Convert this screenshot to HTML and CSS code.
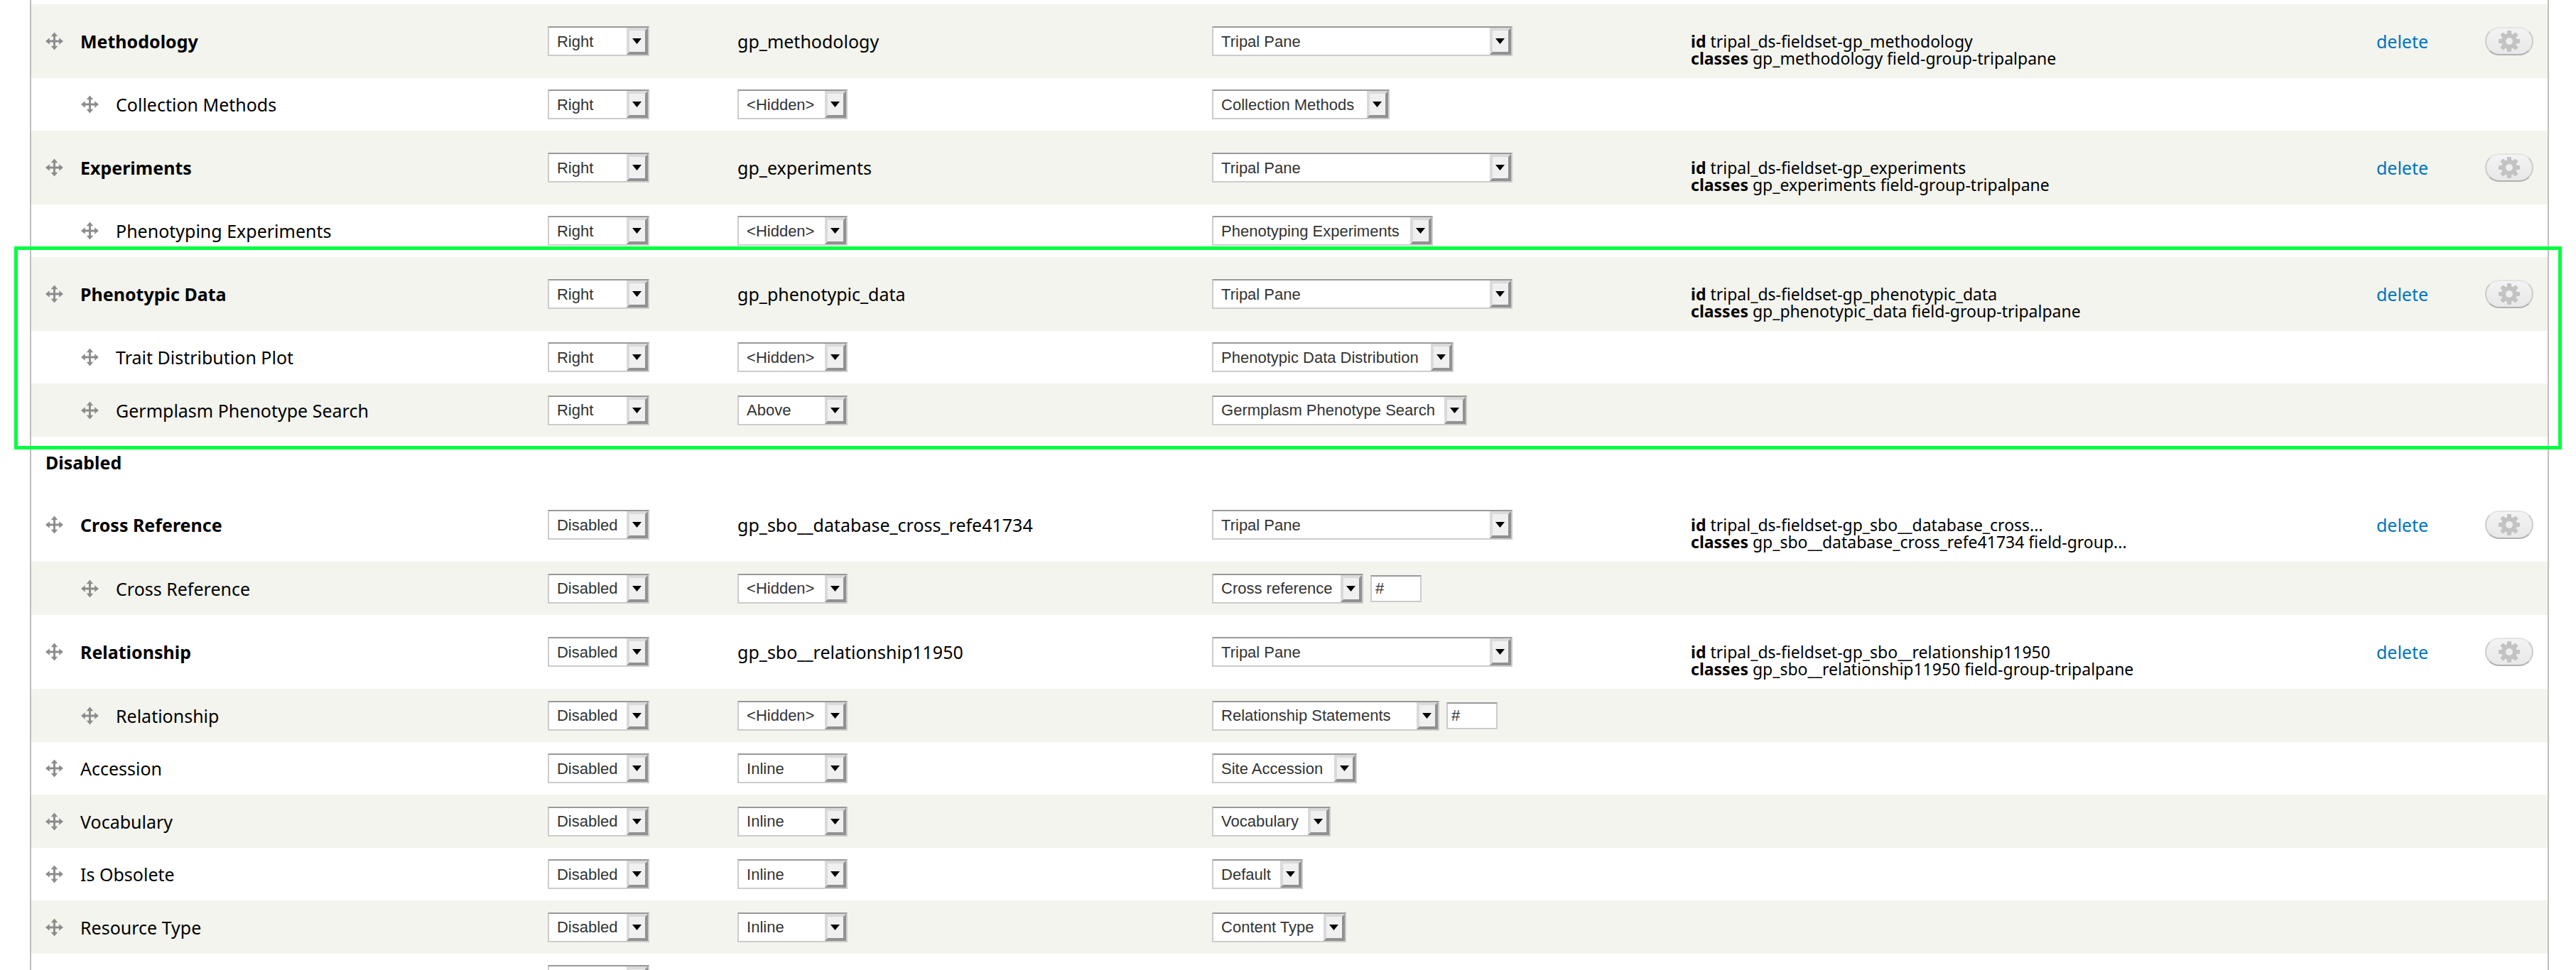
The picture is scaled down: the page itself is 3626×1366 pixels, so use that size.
FILE: index.html
```html
<!DOCTYPE html>
<html lang="en">
<head>
<meta charset="utf-8">
<title>Manage display</title>
<link rel="stylesheet" href="styles.css">
</head>
<body>
<svg class="sprite" aria-hidden="true">
  <symbol id="move" viewBox="0 0 26 26">
    <path d="M13 0l5 6h-3.500v5.500h5.500v-3.500l6 5l-6 5v-3.500h-5.500v5.500h3.500l-5 6l-5-6h3.500v-5.500h-5.500v3.500l-6-5l6-5v3.500h5.500v-5.500h-3.500z"/>
  </symbol>
  <symbol id="gear" viewBox="-15 -15 30 30">
    <g>
      <rect x="-3" y="-15" width="6" height="30" rx="1"/>
      <rect x="-3" y="-15" width="6" height="30" rx="1" transform="rotate(45)"/>
      <rect x="-3" y="-15" width="6" height="30" rx="1" transform="rotate(90)"/>
      <rect x="-3" y="-15" width="6" height="30" rx="1" transform="rotate(135)"/>
      <circle r="11"/>
    </g>
    <circle class="hole" r="5"/>
  </symbol>
</svg>
<main class="overview">
<table class="fields">
  <colgroup><col class="c-label"><col class="c-region"><col class="c-name"><col class="c-format"><col class="c-info"><col class="c-delete"><col class="c-settings"></colgroup>
  <tbody>
    <tr class="group odd">
      <td><div class="field"><svg class="move"><use href="#move"/></svg><b>Methodology</b></div></td>
      <td><select class="region" aria-label="Region for Methodology"><option>Right</option></select></td>
      <td>gp_methodology</td>
      <td><select class="pane" aria-label="Format for Methodology"><option>Tripal Pane</option></select></td>
      <td class="info"><b>id</b> tripal_ds-fieldset-gp_methodology<br><b>classes</b> gp_methodology field-group-tripalpane</td>
      <td><a href="#delete">delete</a></td>
      <td><button type="button" class="settings" aria-label="Edit Methodology"><svg><use href="#gear"/></svg></button></td>
    </tr>
    <tr>
      <td><div class="field child"><svg class="move"><use href="#move"/></svg>Collection Methods</div></td>
      <td><select class="region" aria-label="Region for Collection Methods"><option>Right</option></select></td>
      <td><select class="label" aria-label="Label for Collection Methods"><option>&lt;Hidden&gt;</option></select></td>
      <td><select class="methods" aria-label="Format for Collection Methods"><option>Collection Methods</option></select></td>
      <td></td><td></td><td></td>
    </tr>
    <tr class="group odd">
      <td><div class="field"><svg class="move"><use href="#move"/></svg><b>Experiments</b></div></td>
      <td><select class="region" aria-label="Region for Experiments"><option>Right</option></select></td>
      <td>gp_experiments</td>
      <td><select class="pane" aria-label="Format for Experiments"><option>Tripal Pane</option></select></td>
      <td class="info"><b>id</b> tripal_ds-fieldset-gp_experiments<br><b>classes</b> gp_experiments field-group-tripalpane</td>
      <td><a href="#delete">delete</a></td>
      <td><button type="button" class="settings" aria-label="Edit Experiments"><svg><use href="#gear"/></svg></button></td>
    </tr>
    <tr>
      <td><div class="field child"><svg class="move"><use href="#move"/></svg>Phenotyping Experiments</div></td>
      <td><select class="region" aria-label="Region for Phenotyping Experiments"><option>Right</option></select></td>
      <td><select class="label" aria-label="Label for Phenotyping Experiments"><option>&lt;Hidden&gt;</option></select></td>
      <td><select class="experiments" aria-label="Format for Phenotyping Experiments"><option>Phenotyping Experiments</option></select></td>
      <td></td><td></td><td></td>
    </tr>
  </tbody>
  <tbody class="highlight">
    <tr class="group odd">
      <td><div class="field"><svg class="move"><use href="#move"/></svg><b>Phenotypic Data</b></div></td>
      <td><select class="region" aria-label="Region for Phenotypic Data"><option>Right</option></select></td>
      <td>gp_phenotypic_data</td>
      <td><select class="pane" aria-label="Format for Phenotypic Data"><option>Tripal Pane</option></select></td>
      <td class="info"><b>id</b> tripal_ds-fieldset-gp_phenotypic_data<br><b>classes</b> gp_phenotypic_data field-group-tripalpane</td>
      <td><a href="#delete">delete</a></td>
      <td><button type="button" class="settings" aria-label="Edit Phenotypic Data"><svg><use href="#gear"/></svg></button></td>
    </tr>
    <tr>
      <td><div class="field child"><svg class="move"><use href="#move"/></svg>Trait Distribution Plot</div></td>
      <td><select class="region" aria-label="Region for Trait Distribution Plot"><option>Right</option></select></td>
      <td><select class="label" aria-label="Label for Trait Distribution Plot"><option>&lt;Hidden&gt;</option></select></td>
      <td><select class="distribution" aria-label="Format for Trait Distribution Plot"><option>Phenotypic Data Distribution</option></select></td>
      <td></td><td></td><td></td>
    </tr>
    <tr class="odd">
      <td><div class="field child"><svg class="move"><use href="#move"/></svg>Germplasm Phenotype Search</div></td>
      <td><select class="region" aria-label="Region for Germplasm Phenotype Search"><option>Right</option></select></td>
      <td><select class="label" aria-label="Label for Germplasm Phenotype Search"><option>Above</option></select></td>
      <td><select class="search" aria-label="Format for Germplasm Phenotype Search"><option>Germplasm Phenotype Search</option></select></td>
      <td></td><td></td><td></td>
    </tr>
  </tbody>
  <tbody>
    <tr class="heading"><th colspan="7" scope="rowgroup">Disabled</th></tr>
    <tr class="group">
      <td><div class="field"><svg class="move"><use href="#move"/></svg><b>Cross Reference</b></div></td>
      <td><select class="region" aria-label="Region for Cross Reference group"><option>Disabled</option></select></td>
      <td>gp_sbo__database_cross_refe41734</td>
      <td><select class="pane" aria-label="Format for Cross Reference group"><option>Tripal Pane</option></select></td>
      <td class="info"><b>id</b> tripal_ds-fieldset-gp_sbo__database_cross...<br><b>classes</b> gp_sbo__database_cross_refe41734 field-group...</td>
      <td><a href="#delete">delete</a></td>
      <td><button type="button" class="settings" aria-label="Edit Cross Reference"><svg><use href="#gear"/></svg></button></td>
    </tr>
    <tr class="odd">
      <td><div class="field child"><svg class="move"><use href="#move"/></svg>Cross Reference</div></td>
      <td><select class="region" aria-label="Region for Cross Reference"><option>Disabled</option></select></td>
      <td><select class="label" aria-label="Label for Cross Reference"><option>&lt;Hidden&gt;</option></select></td>
      <td><div class="controls"><select class="reference" aria-label="Format for Cross Reference"><option>Cross reference</option></select><input type="text" value="#" aria-label="Delta for Cross Reference"></div></td>
      <td></td><td></td><td></td>
    </tr>
    <tr class="group">
      <td><div class="field"><svg class="move"><use href="#move"/></svg><b>Relationship</b></div></td>
      <td><select class="region" aria-label="Region for Relationship group"><option>Disabled</option></select></td>
      <td>gp_sbo__relationship11950</td>
      <td><select class="pane" aria-label="Format for Relationship group"><option>Tripal Pane</option></select></td>
      <td class="info"><b>id</b> tripal_ds-fieldset-gp_sbo__relationship11950<br><b>classes</b> gp_sbo__relationship11950 field-group-tripalpane</td>
      <td><a href="#delete">delete</a></td>
      <td><button type="button" class="settings" aria-label="Edit Relationship"><svg><use href="#gear"/></svg></button></td>
    </tr>
    <tr class="odd">
      <td><div class="field child"><svg class="move"><use href="#move"/></svg>Relationship</div></td>
      <td><select class="region" aria-label="Region for Relationship"><option>Disabled</option></select></td>
      <td><select class="label" aria-label="Label for Relationship"><option>&lt;Hidden&gt;</option></select></td>
      <td><div class="controls"><select class="statements" aria-label="Format for Relationship"><option>Relationship Statements</option></select><input type="text" value="#" aria-label="Delta for Relationship"></div></td>
      <td></td><td></td><td></td>
    </tr>
    <tr>
      <td><div class="field"><svg class="move"><use href="#move"/></svg>Accession</div></td>
      <td><select class="region" aria-label="Region for Accession"><option>Disabled</option></select></td>
      <td><select class="label" aria-label="Label for Accession"><option>Inline</option></select></td>
      <td><select class="accession" aria-label="Format for Accession"><option>Site Accession</option></select></td>
      <td></td><td></td><td></td>
    </tr>
    <tr class="odd">
      <td><div class="field"><svg class="move"><use href="#move"/></svg>Vocabulary</div></td>
      <td><select class="region" aria-label="Region for Vocabulary"><option>Disabled</option></select></td>
      <td><select class="label" aria-label="Label for Vocabulary"><option>Inline</option></select></td>
      <td><select class="vocabulary" aria-label="Format for Vocabulary"><option>Vocabulary</option></select></td>
      <td></td><td></td><td></td>
    </tr>
    <tr>
      <td><div class="field"><svg class="move"><use href="#move"/></svg>Is Obsolete</div></td>
      <td><select class="region" aria-label="Region for Is Obsolete"><option>Disabled</option></select></td>
      <td><select class="label" aria-label="Label for Is Obsolete"><option>Inline</option></select></td>
      <td><select class="default" aria-label="Format for Is Obsolete"><option>Default</option></select></td>
      <td></td><td></td><td></td>
    </tr>
    <tr class="odd">
      <td><div class="field"><svg class="move"><use href="#move"/></svg>Resource Type</div></td>
      <td><select class="region" aria-label="Region for Resource Type"><option>Disabled</option></select></td>
      <td><select class="label" aria-label="Label for Resource Type"><option>Inline</option></select></td>
      <td><select class="content-type" aria-label="Format for Resource Type"><option>Content Type</option></select></td>
      <td></td><td></td><td></td>
    </tr>
    <tr>
      <td></td>
      <td><select class="region" aria-label="Region"><option>Disabled</option></select></td>
      <td></td><td></td><td></td><td></td><td></td>
    </tr>
  </tbody>
</table>
</main>
</body>
</html>
```
FILE: styles.css
```css
* { box-sizing: border-box; }

html { height: 100%; overflow: hidden; }

body {
  height: 100%;
  margin: 0;
  overflow: hidden;
  background: #fff;
  color: #000;
  font: 25px/32px "Noto Sans", sans-serif;
}

.sprite { position: absolute; width: 0; height: 0; }

.overview {
  margin: 0 38px 0 42px;
  padding-top: 6px;
  border: solid #bfbfba;
  border-width: 0 2px;
}

.fields {
  width: 100%;
  table-layout: fixed;
  border-collapse: collapse;
}

.c-label { width: 19.96%; }
.c-region { width: 7.54%; }
.c-name { width: 18.86%; }
.c-format { width: 19.03%; }
.c-info { width: 27.24%; }
.c-delete { width: 4.32%; }
.c-settings { width: 3.05%; }

td, th {
  height: 74px;
  padding: 0 0 0 20px;
  text-align: left;
  vertical-align: middle;
  white-space: nowrap;
}

.odd { background: #f3f4ee; }
.odd td { height: 75px; }
.group td { height: 104px; }
.heading th { height: 72px; }

.field { display: flex; align-items: center; gap: 24px; }
.child { padding-left: 50px; }
.move { flex: none; width: 25px; height: 26px; fill: #8c8c8c; }

/* Starts level with the row's label and runs on to a second line below it. */
td.info { padding-top: 24px; font-size: 23px; line-height: 24px; }

a { color: #0074bd; text-decoration: none; }

/* Frame drawn over the table around the highlighted group. */
.highlight { position: relative; }
.highlight::after {
  content: "";
  position: absolute;
  inset: -15px -20px -18px -24px;
  border: 5px solid #00ff40;
  pointer-events: none;
}

select, input {
  display: block;
  margin: 0;
  border: 2px solid #ccc;
  border-top-color: #999;
  border-radius: 0;
  background: #fff;
  color: #333;
  font: 22px "Liberation Sans", Arial, sans-serif;
}

select {
  appearance: none;
  height: 42px;
  padding: 0 30px 0 11px;
  background: #fff url("data:image/svg+xml,%3Csvg xmlns='http://www.w3.org/2000/svg' width='30' height='38'%3E%3Cpath fill='%23dadada' d='M0 0h30v38H0z'/%3E%3Cpath fill='%23919191' d='M30 0v38H0l4-4h22V4z'/%3E%3Cpath fill='%23f0f0f0' d='M4 4h22v30H4z'/%3E%3Cpath d='M8 15h13l-6.500 8z'/%3E%3C/svg%3E") no-repeat right top;
}

input { width: 72px; height: 38px; padding: 0 5px; }

.controls { display: flex; align-items: center; gap: 10px; }

.region { width: 143px; }
.label { width: 155px; }
.pane { width: 423px; }
.methods { width: 250px; }
.experiments { width: 311px; }
.distribution { width: 340px; }
.search { width: 359px; }
.reference { width: 213px; }
.statements { width: 320px; }
.accession { width: 204px; }
.vocabulary { width: 167px; }
.default { width: 128px; }
.content-type { width: 189px; }

.settings {
  display: flex;
  align-items: center;
  justify-content: center;
  width: 68px;
  height: 40px;
  padding: 0;
  border: 2px solid #ccc;
  border-top-color: #e4e4e4;
  border-bottom-color: #b0b0b0;
  border-radius: 20px;
  background: linear-gradient(#f3f3f3, #e8e8e8);
}
.settings svg { width: 30px; height: 30px; fill: #c3c3c3; }
.hole { fill: #eee; }
```
